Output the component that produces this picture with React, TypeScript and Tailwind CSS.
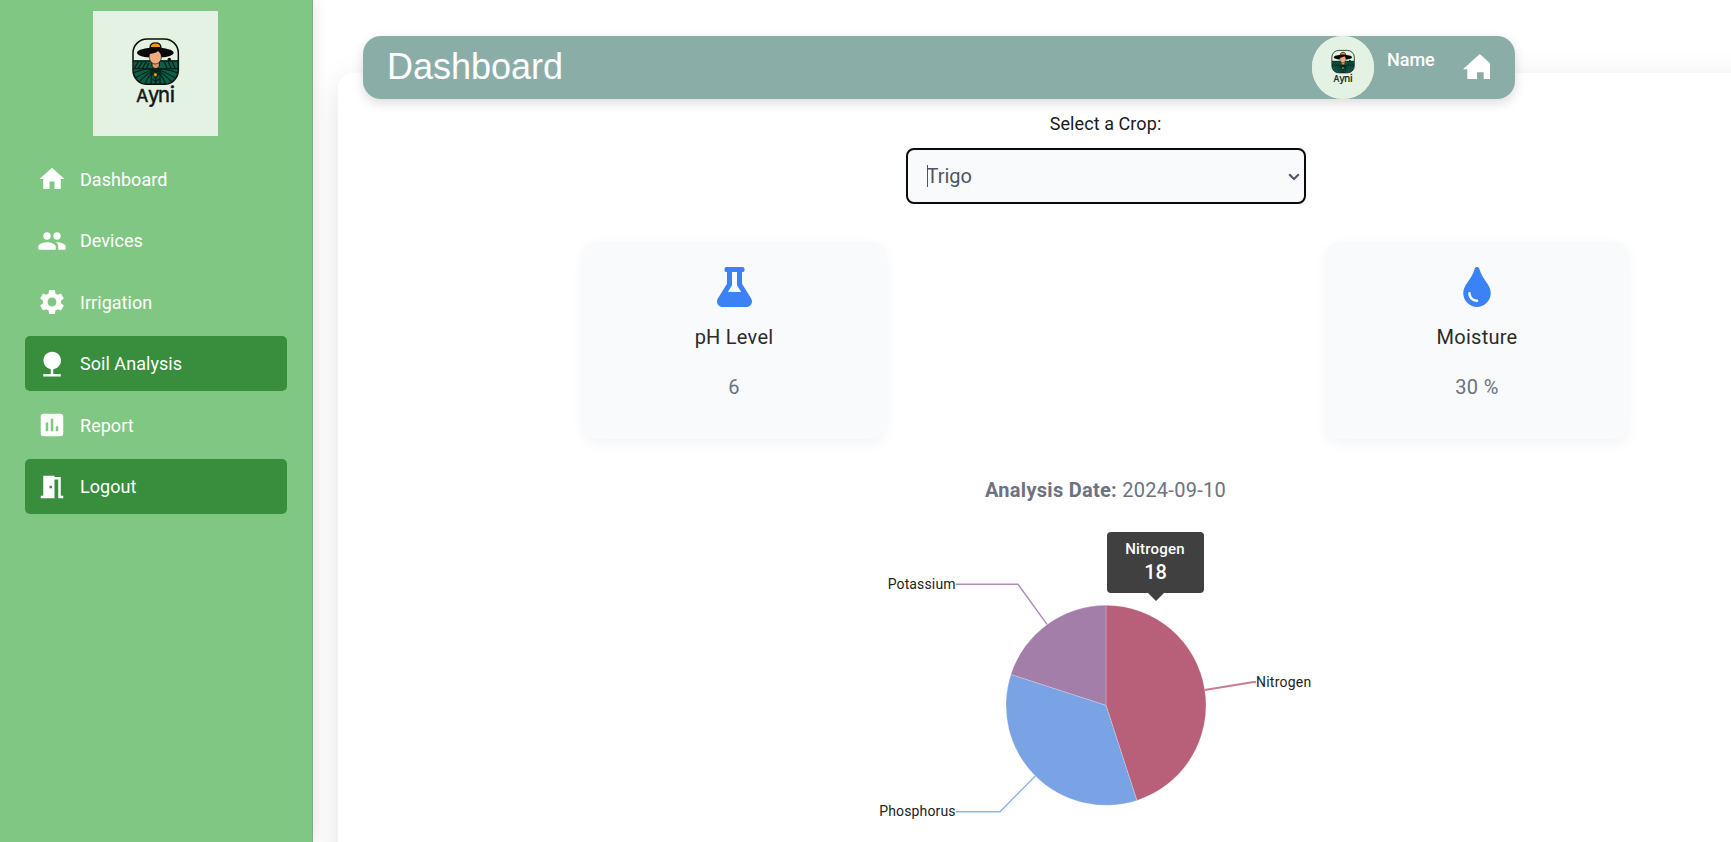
import React from "react";

const roboto = "font-['Roboto',sans-serif]";

function Logo({ className }: { className: string }) {
  return (
    <svg viewBox="0 0 375 375" className={className}>
      <defs>
        <clipPath id="badge">
          <rect x="121" y="85" width="134" height="134" rx="40" />
        </clipPath>
      </defs>
      <rect width="375" height="375" fill="#e3f2e3" />
      <g clipPath="url(#badge)">
        <rect x="119" y="148" width="140" height="75" fill="#0b5f47" />
        <g fill="none" stroke="#06231b" strokeWidth="3.500">
          <path d="M119 150h140M119 173h140" strokeWidth="4" />
          <path d="M124 172l12-20M136 172l12-20M148 172l12-20M226 152l8 20M238 152l8 20M214 152l8 20M160 172l8-16" strokeWidth="4" />
          <path d="M187 174q-22 4-62 28M187 174q-26 14-48 38M187 174q-20 18-32 46M187 174q-12 22-14 48M187 174v48M187 174q12 22 14 48M187 174q20 18 32 46M187 174q26 14 48 38M187 174q22 4 62 28M187 174q-30-3-68 12M187 174q30-3 68 12" />
        </g>
        <path d="M175 184l13 18 13-18v40h-26z" fill="#0b5f47" stroke="#06231b" strokeWidth="4" />
        <path d="M188 200v22M178 204l10 8 10-8" fill="none" stroke="#06231b" strokeWidth="4" />
        <circle cx="229" cy="145" r="5" fill="#111" />
      </g>
      <path d="M177 150h22v16q-11 14-22 0z" fill="#d99468" stroke="#111" strokeWidth="3" />
      <path d="M169 122q18-10 36 0v20q-4 16-18 17-14-1-18-17z" fill="#f0ac7d" stroke="#111" strokeWidth="2" />
      <path d="M132 125c0-9 24-15 55-15s55 6 55 15c0 8-18 13-37 14 0-9-5-15-10-19-5 6-15 6-24 9-3 4-3 8-3 10-18-1-36-6-36-14z" fill="#090909" />
      <path d="M171 110c1-19 32-19 33 0z" fill="#f39a12" stroke="#111" strokeWidth="4" />
      <circle cx="187" cy="191" r="6" fill="#f39a12" stroke="#111" strokeWidth="2" />
      <rect x="120" y="84" width="136" height="136" rx="42" fill="none" stroke="#0c0c0c" strokeWidth="4.5" />
      <g fill="#151515" stroke="#151515" strokeWidth="1.500" fontFamily="Inter, sans-serif" fontWeight="400">
        <text x="130" y="273" fontSize="50" textLength="36" lengthAdjust="spacingAndGlyphs">A</text>
        <text x="165" y="273" fontSize="66" textLength="34" lengthAdjust="spacingAndGlyphs">y</text>
        <text x="195" y="273" fontSize="66" textLength="36" lengthAdjust="spacingAndGlyphs">n</text>
        <text x="230" y="273" fontSize="66">i</text>
      </g>
    </svg>
  );
}

const nav = [
  { label: "Dashboard", active: false, d: "M10 20v-6h4v6h5v-8h3L12 3 2 12h3v8z" },
  {
    label: "Devices",
    active: false,
    d: "M16 11c1.66 0 2.99-1.34 2.99-3S17.66 5 16 5c-1.66 0-3 1.34-3 3s1.34 3 3 3zm-8 0c1.66 0 2.99-1.34 2.99-3S9.66 5 8 5C6.34 5 5 6.34 5 8s1.34 3 3 3zm0 2c-2.33 0-7 1.17-7 3.5V19h14v-2.500c0-2.330-4.670-3.500-7-3.500zm8 0c-.29 0-.62.02-.97.05 1.160.84 1.970 1.970 1.970 3.450V19h6v-2.500c0-2.330-4.670-3.500-7-3.500z",
  },
  {
    label: "Irrigation",
    active: false,
    d: "M19.14 12.94c.04-.3.06-.61.06-.94 0-.32-.02-.64-.07-.94l2.030-1.580c.18-.14.23-.41.12-.61l-1.920-3.320c-.12-.22-.37-.29-.59-.22l-2.390.96c-.5-.38-1.030-.7-1.620-.94l-.36-2.540c-.04-.24-.24-.41-.48-.41h-3.840c-.24 0-.43.17-.47.41l-.36 2.540c-.59.24-1.130.57-1.620.94l-2.390-.96c-.22-.08-.47 0-.59.22L2.740 8.870c-.12.21-.08.47.12.61l2.030 1.580c-.05.3-.09.63-.09.94s.02.64.07.94l-2.030 1.580c-.18.14-.23.41-.12.61l1.920 3.320c.12.22.37.29.59.22l2.390-.96c.5.38 1.030.7 1.620.94l.36 2.540c.05.24.24.41.48.41h3.840c.24 0 .44-.17.47-.41l.36-2.540c.59-.24 1.130-.56 1.620-.94l2.390.96c.22.08.47 0 .59-.22l1.920-3.320c.12-.22.07-.47-.12-.61l-2.010-1.580zM12 15.600c-1.980 0-3.600-1.620-3.600-3.600s1.620-3.600 3.600-3.600 3.600 1.620 3.600 3.600-1.620 3.600-3.600 3.600z",
  },
  { label: "Soil Analysis", active: true, d: "M13 16.120c3.470-.41 6.170-3.360 6.170-6.950 0-3.870-3.130-7-7-7s-7 3.130-7 7c0 3.470 2.520 6.340 5.830 6.890V20H5v2h14v-2h-6v-3.880z" },
  {
    label: "Report",
    active: false,
    d: "M19 3H5c-1.100 0-2 .9-2 2v14c0 1.100.9 2 2 2h14c1.100 0 2-.9 2-2V5c0-1.100-.9-2-2-2zM9 17H7v-7h2v7zm4 0h-2V7h2v10zm4 0h-2v-4h2v4z",
  },
  { label: "Logout", active: true, d: "M14 6v15H3v-2h2V3h9v1h5v15h2v2h-4V6h-3zm-4 5v2h2v-2h-2z" },
];

function Sidebar() {
  return (
    <aside className="z-10 flex w-[313px] shrink-0 flex-col border-r border-[#74b377] bg-[#81c784] pt-[11px] shadow-[0_0_14px_rgba(0,0,0,0.12)]">
      <Logo className="ml-[93px] size-[125px]" />
      <nav className="mt-[15.500px] flex flex-col gap-[6.500px] pl-[25px]">
        {nav.map((n) => (
          <a
            key={n.label}
            className={`flex h-[55px] w-[262px] items-center gap-[13px] rounded-[5px] pl-[12px] pt-[0.500px] text-[18px] tracking-[0.04px] text-white ${n.active ? "bg-[#388e3c]" : ""}`}
          >
            <svg viewBox="0 0 24 24" className="size-[30px] fill-white">
              <path d={n.d} />
            </svg>
            <span>{n.label}</span>
          </a>
        ))}
      </nav>
    </aside>
  );
}

function Header() {
  return (
    <header className="relative z-10 ml-[50px] mt-[36px] flex h-[63px] w-[1152px] rounded-[18px] bg-[#8bada7] pl-[24px] shadow-[0_4px_12px_rgba(0,0,0,0.14)]">
      <h1 className="pt-px font-['Liberation_Sans',sans-serif] text-[36px] leading-[60px] text-white">Dashboard</h1>
      <div className="ml-auto flex">
        <Logo className="h-[63px] w-[62px] rounded-full bg-[#e3f2e3]" />
        <span className="ml-[13px] mt-[11px] text-[18px] font-medium leading-[26px] text-white">Name</span>
        <svg viewBox="0 0 27.300 25.700" className="ml-[28px] mr-[25px] mt-[17.700px] h-[25.700px] w-[27.300px] fill-white">
          <path d="M16.700 0L27.300 9.600V25.700H20.700V18.300H14V25.700H4.300V15.300H0Z" />
        </svg>
      </div>
    </header>
  );
}

function Card({ label, value, children }: { label: string; value: string; children: React.ReactNode }) {
  return (
    <div className="flex h-[197px] w-[301px] flex-col items-center rounded-[12px] bg-[#f9fafc] pt-[25px] shadow-[0_4px_14px_rgba(0,0,0,0.05)]">
      {children}
      <p className="mt-[16px] text-[20px] leading-[28px] tracking-[0.25px] text-[#2b2b2b]">{label}</p>
      <p className="mt-[22px] text-[20px] leading-[28px] tracking-[0.4px] text-[#6b7280]">{value}</p>
    </div>
  );
}

function Chart() {
  return (
    <div className="relative mt-[19px] h-[320px] w-[500px]">
      <svg viewBox="856 522 500 320" className="size-full">
        <g stroke="#fff" strokeOpacity="0.3" strokeWidth="0.7">
          <path d="M1106 704.300V604.300A100 100 0 0 1 1136.900 799.400Z" fill="#b8607a" />
          <path d="M1106 704.300L1136.900 799.400A100 100 0 0 1 1010.900 673.400Z" fill="#7aa3e5" />
          <path d="M1106 704.300L1010.900 673.400A100 100 0 0 1 1106 604.300Z" fill="#a27ea8" />
        </g>
        <g fill="none" strokeWidth="1.400">
          <path d="M1047 623.300L1018 583.300H955.700" stroke="#ae8ab5" />
          <path d="M1204.700 689L1252 681.300L1256 681" stroke="#c77e93" strokeWidth="1.900" />
          <path d="M1035.300 775L1000 810.700H956" stroke="#8fb3ee" />
        </g>
        <g fontSize="14" fill="#222" fontFamily="Roboto, sans-serif" letterSpacing="0.14">
          <text x="955.700" y="588" textAnchor="end">Potassium</text>
          <text x="1256" y="686.300" letterSpacing="0.22">Nitrogen</text>
          <text x="955.700" y="815" textAnchor="end">Phosphorus</text>
        </g>
      </svg>
      <div className="absolute left-[251px] top-[9px] flex h-[61px] w-[97px] flex-col items-center rounded-[4px] bg-[#404040] pt-[7px] font-medium text-white">
        <span className="text-[15px] leading-[20px] tracking-[0.2px]">Nitrogen</span>
        <span className="pl-px text-[20px] leading-[26px]">18</span>
        <svg viewBox="0 0 16 8" className="absolute left-[41px] top-[60.500px] h-[8px] w-[16px] fill-[#404040]">
          <path d="M0 0h16L8 8z" />
        </svg>
      </div>
    </div>
  );
}

export default function App() {
  return (
    <div className={`flex h-[842px] w-full overflow-hidden bg-white ${roboto}`}>
      <Sidebar />
      <div className="flex w-[1418px] shrink-0 flex-col">
        <Header />
        <main className="-mt-[26px] ml-[25px] flex h-[900px] w-[1535px] shrink-0 flex-col items-center rounded-tl-[15px] bg-white pt-[39px] shadow-[0_10px_35px_rgba(0,0,0,0.11)]">
          <label className="text-[18px] leading-[24px] tracking-[0.08px] text-[#1a1a1a]">Select a Crop:</label>
          <div className="mt-[12px] flex h-[56px] w-[400px] items-center justify-between rounded-[8px] border-2 border-[#0b0b0b] bg-[#f9fafc] pl-[19px] pr-[4px] text-[20px] text-[#4b5563]">
            <span className="flex items-center">
              <span className="-mr-px h-[22px] w-px bg-[#4b5563]" />
              Trigo
            </span>
            <svg viewBox="0 0 12 8" className="mt-px h-[8px] w-[12px] fill-none stroke-[#4b5563] stroke-2">
              <path d="M1.200 1.200L6 6l4.800-4.800" />
            </svg>
          </div>
          <div className="mt-[38px] flex gap-[442px]">
            <Card label="pH Level" value="6">
              <svg viewBox="0 0 448 512" className="h-[40px] w-[35px]">
                <path
                  fill="#3b82f6"
                  d="M437.200 403.500L320 215V64h8c13.300 0 24-10.700 24-24V24c0-13.300-10.700-24-24-24H120c-13.300 0-24 10.700-24 24v16c0 13.300 10.700 24 24 24h8v151L10.800 403.500C-18.500 450.600 15.300 512 70.900 512h306.200c55.700 0 89.400-61.500 60.100-108.500zM137.900 320l48.200-77.600c3.700-5.200 5.800-11.600 5.800-18.400V64h64v160c0 6.900 2.200 13.200 5.800 18.400l48.200 77.600h-172z"
                />
              </svg>
            </Card>
            <Card label="Moisture" value="30 %">
              <svg viewBox="0 0 352 512" className="h-[40px] w-[28px]">
                <path
                  fill="#3b82f6"
                  d="M205.220 22.090c-7.940-28.780-49.440-30.120-58.440 0C100.010 179.850 0 222.720 0 333.910 0 432.350 78.720 512 176 512s176-79.650 176-178.090c0-111.750-99.790-153.340-146.780-311.820zM176 448c-61.750 0-112-50.250-112-112 0-8.840 7.160-16 16-16s16 7.160 16 16c0 44.110 35.890 80 80 80 8.840 0 16 7.160 16 16s-7.160 16-16 16z"
                />
              </svg>
            </Card>
          </div>
          <p className="mt-[37px] text-[20px] leading-[28px] tracking-[0.28px] text-[#6b7280]">
            <b className="font-bold">Analysis Date:</b> 2024-09-10
          </p>
          <Chart />
        </main>
      </div>
    </div>
  );
}
